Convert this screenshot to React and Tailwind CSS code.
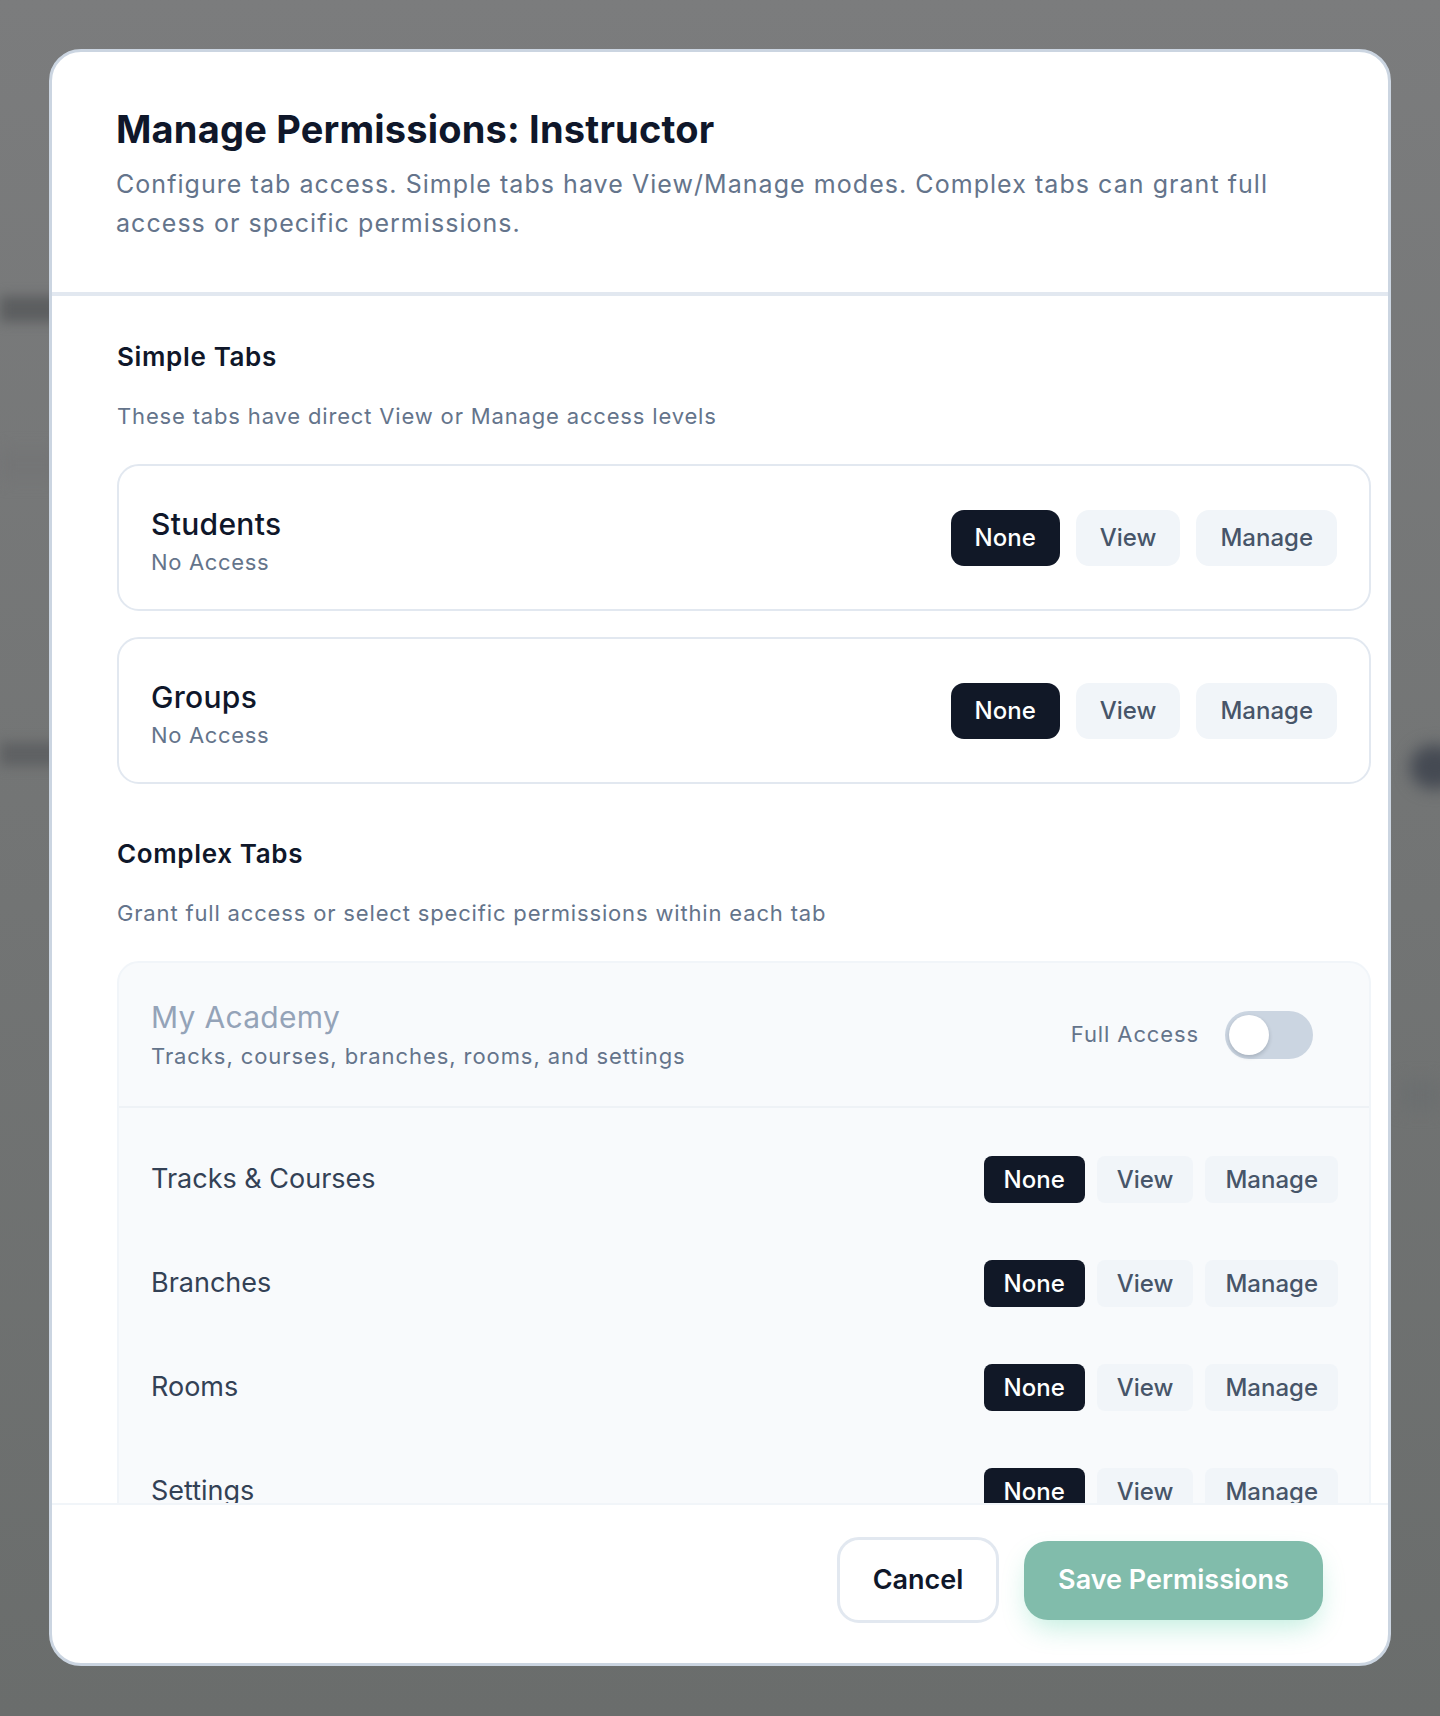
import React from "react";

const simpleTabs = [
  { name: "Students", status: "No Access" },
  { name: "Groups", status: "No Access" },
];

const academyRows = ["Tracks & Courses", "Branches", "Rooms", "Settings"];

function LevelButtons({ size }) {
  const levels = ["None", "View", "Manage"];
  const big = size === "lg";
  return (
    <div className={big ? "flex gap-4" : "flex gap-3"}>
      {levels.map((lvl) => (
        <button
          key={lvl}
          className={
            (big
              ? "h-[56px] px-[24px] rounded-[13px] "
              : "h-[47px] px-[20px] rounded-[8px] ") +
            "text-[24px] font-medium leading-none " +
            (lvl === "None"
              ? "bg-[#111827] text-white"
              : "bg-[#f1f5f9] text-[#475569]")
          }
        >
          {lvl}
        </button>
      ))}
    </div>
  );
}

function SimpleCard({ tab }) {
  return (
    <div className="flex h-[147px] items-center justify-between rounded-[22px] border-2 border-[#e2e8f0] px-[32px]">
      <div className="pt-[7px]">
        <div className="text-[30px] leading-[36px] font-medium tracking-[0.01em] text-[#0f172a]">
          {tab.name}
        </div>
        <div className="mt-[5px] text-[22px] leading-[30px] tracking-[0.03em] text-[#64748b]">
          {tab.status}
        </div>
      </div>
      <LevelButtons size="lg" />
    </div>
  );
}

function Toggle() {
  return (
    <div className="flex h-[48px] w-[88px] items-center rounded-full bg-[#cbd5e1] px-[4px]">
      <span className="h-[40px] w-[40px] rounded-full bg-white shadow-[0_2px_4px_rgba(15,23,42,0.2)]"></span>
    </div>
  );
}

export default function App() {
  return (
    <div className="relative min-h-[1716px] w-full overflow-hidden bg-gradient-to-b from-[#7b7c7d] to-[#6a6d6c] font-['Inter','Noto_Sans',sans-serif]">
      {/* blurred page behind the overlay */}
      <div className="absolute left-0 top-[296px] h-[26px] w-[60px] bg-[#5c5e60] blur-[6px]"></div>
      <div className="absolute left-0 top-[742px] h-[24px] w-[60px] bg-[#5f6163] blur-[6px]"></div>
      <div className="absolute left-0 top-[450px] h-[30px] w-[60px] bg-[#747576] blur-[8px]"></div>
      <div className="absolute right-[-20px] top-[745px] h-[44px] w-[50px] rounded-full bg-[#454a53] blur-[8px]"></div>
      <div className="absolute right-0 top-[1080px] h-[30px] w-[40px] bg-[#6c6f70] blur-[8px]"></div>

      <div className="relative pl-[49px] pt-[49px]">
        <div className="flex h-[1617px] w-[1342px] flex-col overflow-hidden rounded-[32px] border-[3px] border-[#cbd5e1] bg-white">
          {/* header */}
          <div className="border-b-4 border-[#e2e8f0] px-[64px] pt-[57px] pb-[49px]">
            <h2 className="text-[38px] leading-[40px] font-bold tracking-[0.005em] text-[#0f172a]">
              Manage Permissions: Instructor
            </h2>
            <p className="mt-[16px] text-[25px] leading-[39px] tracking-[0.042em] text-[#64748b]">
              Configure tab access. Simple tabs have View/Manage modes. Complex
              tabs can grant full access or specific permissions.
            </p>
          </div>

          {/* scroll body */}
          <div className="min-h-0 flex-1 overflow-hidden pl-[65px] pr-[17px] pt-[45px]">
            <h3 className="text-[26px] leading-[32px] font-semibold tracking-[0.025em] text-[#0f172a]">
              Simple Tabs
            </h3>
            <p className="mt-[28px] text-[22px] leading-[30px] tracking-[0.038em] text-[#64748b]">
              These tabs have direct View or Manage access levels
            </p>
            <div className="mt-[33px] flex flex-col gap-[26px]">
              {simpleTabs.map((t) => (
                <SimpleCard key={t.name} tab={t} />
              ))}
            </div>

            <h3 className="mt-[54px] text-[26px] leading-[32px] font-semibold tracking-[0.025em] text-[#0f172a]">
              Complex Tabs
            </h3>
            <p className="mt-[28px] text-[22px] leading-[30px] tracking-[0.038em] text-[#64748b]">
              Grant full access or select specific permissions within each tab
            </p>

            <div className="mt-[33px] rounded-[22px] border-2 border-[#f1f5f9] bg-[#f8fafc]">
              <div className="flex h-[145px] items-center justify-between border-b-2 border-[#eef2f6] pl-[32px] pr-[56px]">
                <div>
                  <div className="text-[30px] leading-[36px] tracking-[0.01em] text-[#94a3b8]">
                    My Academy
                  </div>
                  <div className="mt-[6px] text-[22px] leading-[30px] tracking-[0.042em] text-[#64748b]">
                    Tracks, courses, branches, rooms, and settings
                  </div>
                </div>
                <div className="flex items-center gap-[26px]">
                  <span className="text-[22px] tracking-[0.04em] text-[#64748b]">Full Access</span>
                  <Toggle />
                </div>
              </div>
              <div className="flex flex-col gap-[57px] pt-[48px] pl-[32px] pr-[31px] pb-[40px]">
                {academyRows.map((row) => (
                  <div key={row} className="flex items-center justify-between">
                    <span className="text-[27px] text-[#334155]">{row}</span>
                    <LevelButtons size="sm" />
                  </div>
                ))}
              </div>
            </div>
          </div>

          {/* footer */}
          <div className="flex items-center justify-end gap-[25px] border-t-2 border-[#f1f5f9] pt-[32px] pb-[40px] pr-[65px]">
            <button className="h-[86px] w-[162px] rounded-[22px] border-[3px] border-[#e2e8f0] bg-white text-[27px] font-semibold text-[#0f172a]">
              Cancel
            </button>
            <button className="h-[79px] w-[299px] rounded-[24px] bg-[#81bcab] text-[27px] font-semibold text-white shadow-[0_12px_28px_-6px_rgba(16,185,129,0.28)]">
              Save Permissions
            </button>
          </div>
        </div>
      </div>
    </div>
  );
}
